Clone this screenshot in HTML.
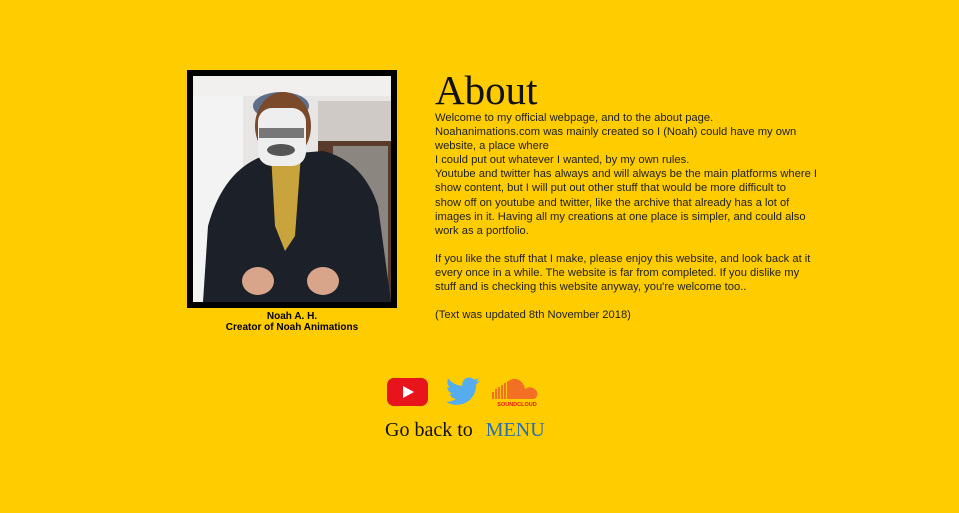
<!DOCTYPE html>
<html><head><style>
body{margin:0;background:#ffcc00;width:959px;height:513px;overflow:hidden;position:relative;font-family:"Liberation Sans",sans-serif;}
.frame{position:absolute;left:187px;top:70px;width:198px;height:226px;border:6px solid #000;background:#ddd;overflow:hidden}
.cap{position:absolute;left:187px;top:311px;width:210px;text-align:center;font-size:10px;font-weight:bold;line-height:11px;color:#000}
h1{position:absolute;left:435px;top:66px;margin:0;font:normal 41px "Liberation Serif",serif;color:#111}
.txt{position:absolute;left:435px;top:111px;white-space:nowrap;font-size:11.2px;line-height:14.1px;color:#222}
.back{position:absolute;left:385px;top:419px;font:20px "Liberation Serif",serif;color:#111}
.back span{color:#2a6fb0;margin-left:8px}
</style></head><body>
<div class="frame">
<svg width="198" height="226" viewBox="0 0 198 226">
<rect width="198" height="226" fill="#e8e6e4"/>
<rect x="0" y="0" width="198" height="20" fill="#f1f0ee"/>
<rect x="0" y="20" width="50" height="206" fill="#f3f3f3"/>
<rect x="125" y="25" width="73" height="40" fill="#cfcac6"/>
<rect x="125" y="65" width="73" height="161" fill="#5a3a2a"/>
<rect x="140" y="70" width="55" height="150" fill="#8c8680"/>
<path d="M10 226 L15 150 Q30 95 70 80 L130 75 Q170 85 185 130 L198 226Z" fill="#1c2028"/>
<path d="M78 78 L108 78 L102 160 L92 175 L82 150Z" fill="#c9a43c"/>
<ellipse cx="88" cy="30" rx="28" ry="14" fill="#5d6f8a"/>
<ellipse cx="90" cy="50" rx="28" ry="34" fill="#7a4a2a"/>
<rect x="65" y="32" width="48" height="58" rx="14" fill="#eeeeee"/>
<rect x="66" y="52" width="45" height="10" fill="#777"/>
<ellipse cx="88" cy="74" rx="14" ry="6" fill="#555"/>
<ellipse cx="65" cy="205" rx="16" ry="14" fill="#d9a58a"/>
<ellipse cx="130" cy="205" rx="16" ry="14" fill="#d9a58a"/>
</svg>
</div>
<div class="cap">Noah A. H.<br>Creator of Noah Animations</div>
<h1>About</h1>
<div class="txt">Welcome to my official webpage, and to the about page.<br>Noahanimations.com was mainly created so I (Noah) could have my own<br>website, a place where<br>I could put out whatever I wanted, by my own rules.<br>Youtube and twitter has always and will always be the main platforms where I<br>show content, but I will put out other stuff that would be more difficult to<br>show off on youtube and twitter, like the archive that already has a lot of<br>images in it. Having all my creations at one place is simpler, and could also<br>work as a portfolio.<br><br>If you like the stuff that I make, please enjoy this website, and look back at it<br>every once in a while. The website is far from completed. If you dislike my<br>stuff and is checking this website anyway, you're welcome too..<br><br>(Text was updated 8th November 2018)</div>
<svg style="position:absolute;left:387px;top:377px" width="42" height="30" viewBox="0 0 42 30"><rect x="0" y="1" width="41" height="28" rx="7" fill="#e8141b"/><path d="M16 9 L27 15 L16 21Z" fill="#fff"/></svg>
<svg style="position:absolute;left:445px;top:377px" width="36" height="30" viewBox="0 0 24 20"><path d="M23 2.5c-.8.4-1.7.6-2.6.7.9-.6 1.6-1.4 2-2.5-.9.5-1.9.9-2.9 1.1C18.6.9 17.4.3 16.1.3c-2.5 0-4.6 2.1-4.6 4.6 0 .4 0 .7.1 1C7.8 5.7 4.4 3.9 2.2 1.1c-.4.7-.6 1.5-.6 2.3 0 1.6.8 3 2 3.8-.8 0-1.5-.2-2.1-.6v.1c0 2.2 1.6 4.1 3.7 4.5-.4.1-.8.2-1.2.2-.3 0-.6 0-.9-.1.6 1.8 2.3 3.2 4.3 3.2-1.6 1.2-3.6 2-5.7 2H.6c2 1.3 4.5 2.1 7.1 2.1 8.5 0 13.1-7 13.1-13.1v-.6c.9-.6 1.7-1.4 2.2-2.4z" fill="#55acee"/></svg>
<svg style="position:absolute;left:491px;top:377px" width="52" height="32" viewBox="0 0 52 32"><path d="M2 22 L2 15 M5 22 L5 12 M8 22 L8 10 M11 22 L11 8 M14 22 L14 6" stroke="#f26f23" stroke-width="2"/><path d="M16 22 L16 5 Q22 0 28 3 Q33 6 34 12 Q38 9 42 11 Q48 14 46 19 Q45 22 41 22Z" fill="#f26f23"/><text x="26" y="29" font-size="5.5" font-weight="bold" fill="#e8141b" text-anchor="middle" font-family="Liberation Sans">SOUNDCLOUD</text></svg>
<div class="back">Go back to <span>MENU</span></div>
</body></html>
